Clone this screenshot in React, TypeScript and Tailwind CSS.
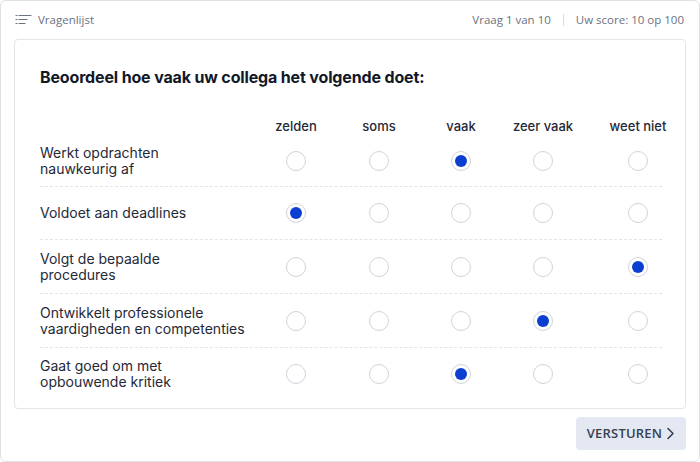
import React from "react";

const cols = ["zelden", "soms", "vaak", "zeer vaak", "weet niet"];
const rows: { label: string[]; sel: number; h: string }[] = [
  { label: ["Werkt opdrachten", "nauwkeurig af"], sel: 2, h: "h-[51px]" },
  { label: ["Voldoet aan deadlines"], sel: 0, h: "h-[53px]" },
  { label: ["Volgt de bepaalde", "procedures"], sel: 4, h: "h-[54px]" },
  { label: ["Ontwikkelt professionele", "vaardigheden en competenties"], sel: 3, h: "h-[54px]" },
  { label: ["Gaat goed om met", "opbouwende kritiek"], sel: 2, h: "h-[52px]" },
];

function Radio({ on }: { on: boolean }) {
  return (
    <div className="w-[20px] h-[20px] rounded-full border border-[#cfd4dc] bg-white flex items-center justify-center">
      {on && <div className="w-[12px] h-[12px] rounded-full bg-[#0b3fd2]" />}
    </div>
  );
}

const grid = "grid grid-cols-[214px_84px_82px_82px_82px_108px] items-center";

export default function App() {
  return (
    <div className="w-[700px] h-[462px] bg-white">
      <div className="w-[700px] h-[462px] border border-[#dfe1e5] rounded-[6px] px-[13px] flex flex-col" style={{ fontFamily: "'Open Sans', sans-serif" }}>
        <div className="h-[38px] flex items-center justify-between text-[11.5px] text-[#6b7280]">
          <div className="flex items-center gap-[6px] pl-[1px]">
            <svg width="17" height="12" viewBox="0 0 17 12" fill="none" stroke="#6b7280" strokeWidth="1.2" strokeLinecap="round">
              <line x1="1" y1="1.5" x2="2" y2="1.5" />
              <line x1="4" y1="1.5" x2="16" y2="1.5" />
              <line x1="1" y1="5.5" x2="2" y2="5.5" />
              <line x1="4" y1="5.5" x2="12" y2="5.5" />
              <line x1="1" y1="9.5" x2="2" y2="9.5" />
              <line x1="4" y1="9.5" x2="10" y2="9.5" />
            </svg>
            <span>Vragenlijst</span>
          </div>
          <div className="flex items-center pr-[2px]">
            <span>Vraag 1 van 10</span>
            <span className="mx-[12px] w-px h-[12px] bg-[#d9dce1]" />
            <span>Uw score: 10 op 100</span>
          </div>
        </div>
        <div className="h-[370px] border border-[#e3e5e9] rounded-[4px] pl-[25px] pt-[27px]" style={{ fontFamily: "Inter, sans-serif" }}>
          <h1 className="text-[16px] leading-[20px] font-bold text-[#111827] tracking-[-0.15px]">
            Beoordeel hoe vaak uw collega het volgende doet:
          </h1>
          <div className={`${grid} mt-[30px] h-[19px] text-[13px] font-medium text-[#1f2937]`}>
            <div />
            {cols.map((c) => (
              <div key={c} className="flex justify-center whitespace-nowrap">{c}</div>
            ))}
          </div>
          <div className="w-[622px]">
            {rows.map((r, i) => (
              <div
                key={i}
                className={`${grid} ${r.h} ${i < rows.length - 1 ? "border-b border-dashed border-[#e2e4e8]" : ""}`}
              >
                <div className="text-[14px] leading-[16px] text-[#1f2937]">
                  {r.label.map((l) => (
                    <div key={l}>{l}</div>
                  ))}
                </div>
                {cols.map((c, j) => (
                  <div key={c} className="flex justify-center">
                    <Radio on={r.sel === j} />
                  </div>
                ))}
              </div>
            ))}
          </div>
        </div>
        <div className="flex justify-end pt-[8px]">
          <button className="h-[33px] w-[110px] rounded-[4px] bg-[#e3e8f2] flex items-center justify-center gap-[4px] text-[13px] font-semibold text-[#374151] tracking-[0.2px]">
            VERSTUREN
            <svg width="9" height="13" viewBox="0 0 9 13" fill="none" stroke="#374151" strokeWidth="1.6" strokeLinecap="round" strokeLinejoin="round">
              <path d="M2 1.5 L7 6.5 L2 11.5" />
            </svg>
          </button>
        </div>
      </div>
    </div>
  );
}
